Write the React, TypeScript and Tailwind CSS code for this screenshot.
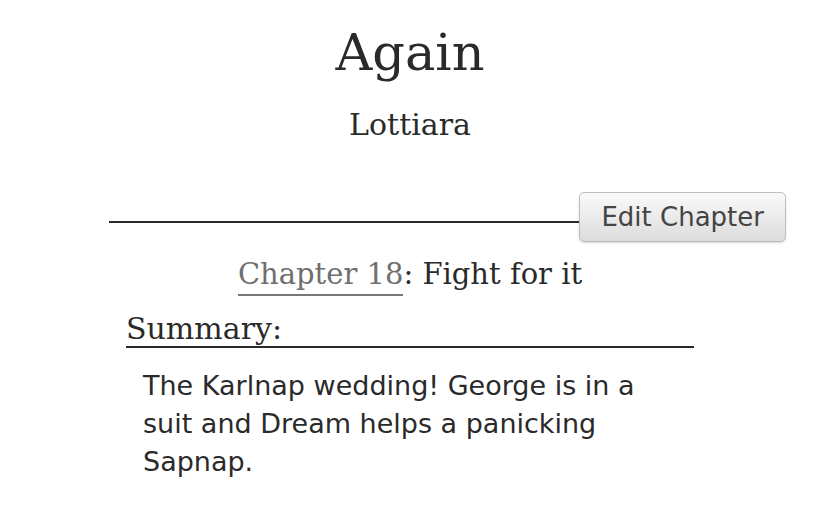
export default function App() {
  const serif = { fontFamily: '"DejaVu Serif", serif' };
  const sans = { fontFamily: '"DejaVu Sans", sans-serif' };
  return (
    <div className="w-[828px] h-[513px] bg-white text-[#2a2a2a] overflow-hidden">
      <div className="w-[820px]">
        <h2 className="text-center text-[51px] leading-none pt-[27px] text-[#2a2a2a]" style={serif}>
          Again
        </h2>
        <h3 className="text-center text-[30px] leading-none mt-[32px]" style={serif}>
          Lottiara
        </h3>
        <div className="flex items-center ml-[109px] w-[677px] mt-[52px]">
          <div className="flex-1 h-[2px] bg-[#2a2a2a] mt-[10px]" />
          <button
            className="h-[50px] px-[21px] rounded-[5px] border border-[#bdbdbd] bg-gradient-to-b from-[#fafafa] to-[#dcdcdc] text-[#444] text-[26px] shadow-[0_1px_2px_rgba(0,0,0,0.15)]"
            style={sans}
          >
            Edit Chapter
          </button>
        </div>
        <div className="text-center text-[29px] leading-none mt-[18px]" style={serif}>
          <span className="text-[#6f6f6f] border-b-2 border-[#777] pb-[3px]">Chapter 18</span>
          <span>: Fight for it</span>
        </div>
        <div className="ml-[126px] w-[568px] mt-[25px]">
          <div className="text-[30px] leading-none border-b-2 border-[#2a2a2a] pb-[2px]" style={serif}>
            Summary:
          </div>
          <p className="ml-[17px] w-[510px] mt-[19px] text-[27px] leading-[38px] text-[#2a2a2a]" style={sans}>
            The Karlnap wedding! George is in a suit and Dream helps a panicking Sapnap.
          </p>
        </div>
      </div>
    </div>
  );
}
